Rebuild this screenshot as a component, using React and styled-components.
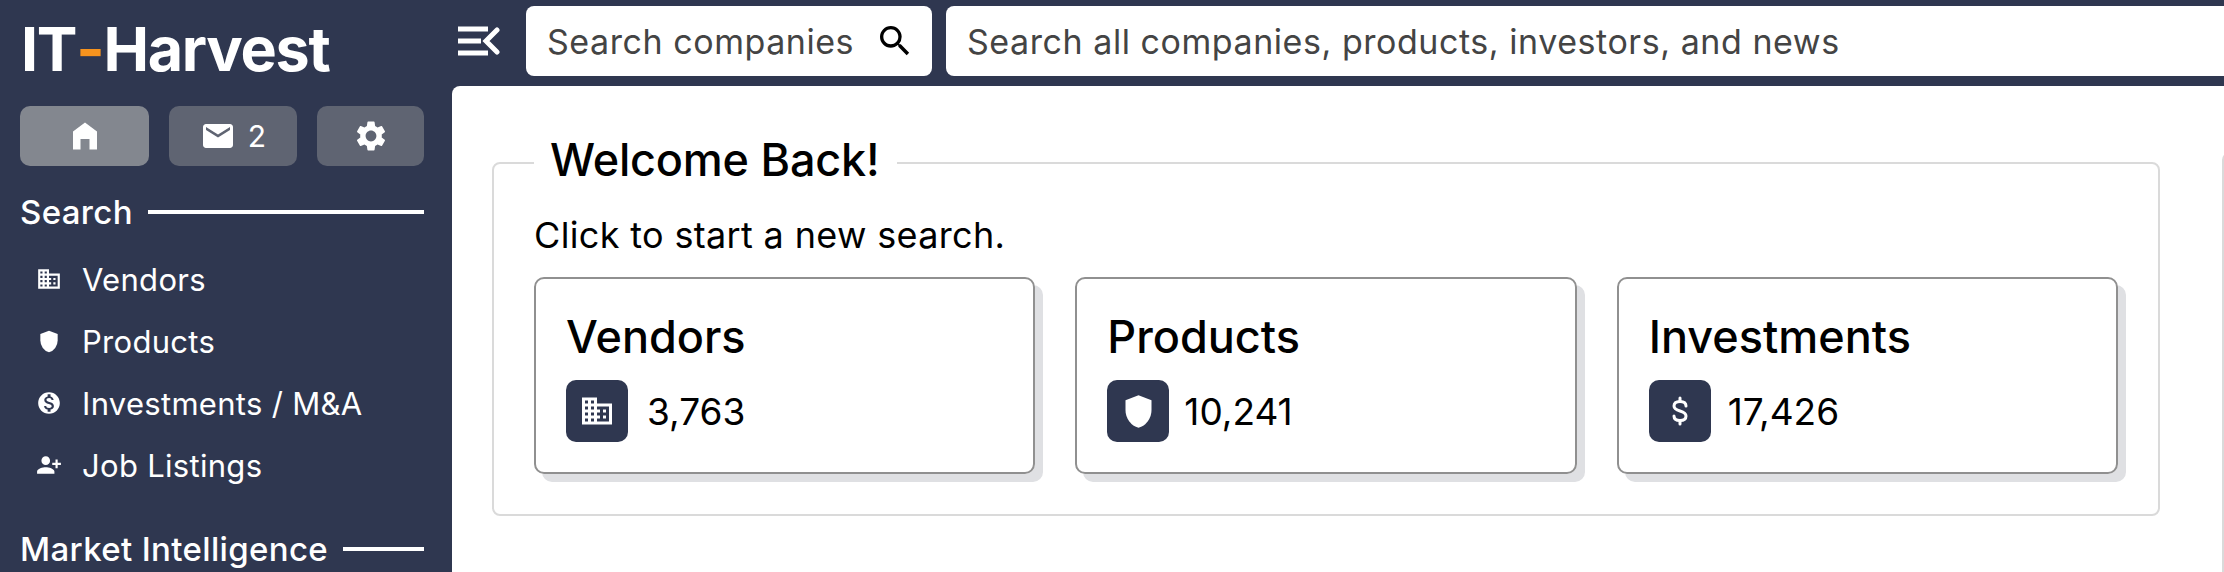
import React from 'react'
import styled, { createGlobalStyle } from 'styled-components'
import {
	MdDomain,
	MdEmail,
	MdMonetizationOn,
	MdPersonAdd,
	MdSearch,
	MdSettings,
} from 'react-icons/md'

const GlobalStyle = createGlobalStyle`
	* {
		box-sizing: border-box;
	}

	body {
		margin: 0;
		background: #2f3750;
		font-family: Inter, 'Liberation Sans', sans-serif;
	}
`

const Page = styled.div`
	display: flex;
	height: 572px;
	overflow: hidden;
`

const Sidebar = styled.aside`
	flex: none;
	width: 452px;
	padding: 0 28px 0 20px;
	background: #2f3750;
	color: #fff;
`

const Logo = styled.div`
	display: flex;
	align-items: center;
	height: 106px;
	padding: 0 0 8px 1px;
	font-size: 61px;
	font-weight: 700;
	letter-spacing: -1.3px;
`

const Dash = styled.span`
	color: #f7931e;
`

const IconButtons = styled.div`
	display: grid;
	grid-template-columns: 129px 128px 107px;
	gap: 20px;
`

const IconButton = styled.button`
	display: flex;
	align-items: center;
	justify-content: center;
	gap: 12px;
	height: 60px;
	padding: 0;
	border: 0;
	border-radius: 10px;
	background: ${(props) => (props.$active ? '#83878f' : '#5f6472')};
	color: #fff;
	font-family: inherit;
	font-size: 30px;
`

const SectionHead = styled.div`
	display: flex;
	align-items: center;
	gap: 15px;
	height: 40px;
	margin-top: ${(props) => props.$top}px;
	font-size: 33px;
	font-weight: 500;
	letter-spacing: 0.35px;
	white-space: nowrap;

	&::after {
		content: '';
		flex: 1;
		height: 4px;
		background: #fff;
	}
`

const NavList = styled.nav`
	margin-top: 16px;
`

const NavItem = styled.div`
	display: flex;
	align-items: center;
	gap: 20px;
	height: 62px;
	padding-left: 16px;
	font-size: 31px;
	letter-spacing: 0.3px;
`

const NavIcon = styled.span`
	display: flex;
	flex: none;
	align-items: center;
	justify-content: center;
	width: 26px;
`

const Flipped = styled(MdPersonAdd)`
	flex: none;
	transform: scaleX(-1);
`

const Content = styled.div`
	display: flex;
	flex: 1;
	flex-direction: column;
	min-width: 0;
`

const Header = styled.header`
	display: flex;
	flex: none;
	align-items: flex-start;
	gap: 14px;
	height: 86px;
	padding: 6px 0 0 6px;
`

const Toggle = styled.button`
	display: flex;
	align-items: center;
	height: 70px;
	margin-right: 12px;
	padding: 0;
	border: 0;
	background: none;
`

const SearchBox = styled.label`
	display: flex;
	flex: ${(props) => (props.$grow ? '1' : 'none')};
	align-items: center;
	width: ${(props) => (props.$grow ? 'auto' : '406px')};
	height: 70px;
	padding: 0 17px 0 21px;
	border-radius: ${(props) => (props.$grow ? '8px 0 0 8px' : '8px')};
	background: #fff;
`

const SearchInput = styled.input`
	flex: 1;
	min-width: 0;
	padding: 0;
	border: 0;
	outline: 0;
	background: none;
	font-family: inherit;
	font-size: 34px;
	letter-spacing: 0.55px;

	&::placeholder {
		color: #444;
		opacity: 1;
	}
`

const Main = styled.main`
	display: flex;
	flex: 1;
	align-items: flex-start;
	gap: 62px;
	padding: 46px 0 0 40px;
	overflow: hidden;
	border-top-left-radius: 8px;
	background: #fff;
`

const Panel = styled.fieldset`
	flex: none;
	width: 1668px;
	margin: 0;
	padding: 19px 40px 40px;
	border: 2px solid #dadada;
	border-radius: 8px;
`

const PanelTitle = styled.legend`
	margin-left: 0;
	padding: 0 17px 6px 16px;
	font-size: 45px;
	font-weight: 500;
	letter-spacing: -0.2px;
	line-height: 56px;
`

const SidePanel = styled.div`
	flex: none;
	width: 400px;
	height: 500px;
	margin-top: 20px;
	border: 2px solid #dadada;
	border-radius: 8px;
`

const Intro = styled.p`
	margin: 0 0 20px;
	font-size: 36px;
	letter-spacing: 0.34px;
	line-height: 44px;
`

const Cards = styled.div`
	display: grid;
	grid-template-columns: repeat(3, 1fr);
	gap: 40px;
`

const Card = styled.div`
	height: 197px;
	padding: 30px 30px 0;
	border: 2px solid #909090;
	border-radius: 10px;
	box-shadow: 8px 8px 0 #dfe0e3;
`

const CardTitle = styled.div`
	height: 56px;
	font-size: 45px;
	font-weight: 500;
	line-height: 56px;
`

const CardStat = styled.div`
	display: flex;
	align-items: center;
	gap: ${(props) => props.$gap}px;
	margin-top: 15px;
	font-size: 37px;
`

const StatIcon = styled.div`
	display: flex;
	align-items: center;
	justify-content: center;
	width: 62px;
	height: 62px;
	border-radius: 10px;
	background: #2f3750;
	color: #fff;
`

const HomeIcon = () => (
	<svg width='36' height='36' viewBox='0 -960 960 960' fill='currentColor'>
		<path d='M160-120v-480l320-240 320 240v480H600v-280H360v280H160Z' />
	</svg>
)

const ShieldIcon = ({ size }) => (
	<svg width={size} height={size} viewBox='0 -960 960 960' fill='currentColor'>
		<path d='M480-80q-139-35-229.5-159.5T160-516v-244l320-120 320 120v244q0 152-90.5 276.5T480-80Z' />
	</svg>
)

const DollarIcon = () => (
	<svg width='18' height='30' viewBox='0 0 18 30' fill='none' stroke='#fff' strokeWidth='3' strokeLinecap='round'>
		<path d='M15 10c0-3-2.500-4.500-6-4.500S3 7 3 10s2.500 4 6 5 6 2 6 5-2.500 4.500-6 4.500S3 23 3 20' />
		<path d='M9 2v3.500M9 24.500V28' />
	</svg>
)

const MenuOpenIcon = () => (
	<svg width='42' height='30' viewBox='0 0 42 30' fill='none' stroke='#fff' strokeWidth='5'>
		<path d='M0 3h30M0 15h23M0 27h30' />
		<path d='M39 4 28 15l11 11' strokeLinecap='round' />
	</svg>
)

const navItems = [
	{ label: 'Vendors', icon: <MdDomain size={26} /> },
	{ label: 'Products', icon: <ShieldIcon size={29} /> },
	{ label: 'Investments / M&A', icon: <MdMonetizationOn size={26} /> },
	{ label: 'Job Listings', icon: <Flipped size={26} /> },
]

const cards = [
	{ title: 'Vendors', count: '3,763', gap: 19, icon: <MdDomain size={36} /> },
	{ title: 'Products', count: '10,241', gap: 15, icon: <ShieldIcon size={39} /> },
	{ title: 'Investments', count: '17,426', gap: 17, icon: <DollarIcon /> },
]

const App = () => (
	<Page>
		<GlobalStyle />
		<Sidebar>
			<Logo>
				IT<Dash>-</Dash>Harvest
			</Logo>
			<IconButtons>
				<IconButton $active aria-label='Home'>
					<HomeIcon />
				</IconButton>
				<IconButton aria-label='Messages'>
					<MdEmail size={36} />2
				</IconButton>
				<IconButton aria-label='Settings'>
					<MdSettings size={36} />
				</IconButton>
			</IconButtons>
			<SectionHead $top={26}>Search</SectionHead>
			<NavList>
				{navItems.map((item) => (
					<NavItem key={item.label}>
						<NavIcon>{item.icon}</NavIcon>
						{item.label}
					</NavItem>
				))}
			</NavList>
			<SectionHead $top={33}>Market Intelligence</SectionHead>
		</Sidebar>
		<Content>
			<Header>
				<Toggle aria-label='Collapse menu'>
					<MenuOpenIcon />
				</Toggle>
				<SearchBox>
					<SearchInput placeholder='Search companies' />
					<MdSearch size={40} />
				</SearchBox>
				<SearchBox $grow>
					<SearchInput placeholder='Search all companies, products, investors, and news' />
				</SearchBox>
			</Header>
			<Main>
				<Panel>
					<PanelTitle>Welcome Back!</PanelTitle>
					<Intro>Click to start a new search.</Intro>
					<Cards>
						{cards.map((card) => (
							<Card key={card.title}>
								<CardTitle>{card.title}</CardTitle>
								<CardStat $gap={card.gap}>
									<StatIcon>{card.icon}</StatIcon>
									{card.count}
								</CardStat>
							</Card>
						))}
					</Cards>
				</Panel>
				<SidePanel />
			</Main>
		</Content>
	</Page>
)

export default App
